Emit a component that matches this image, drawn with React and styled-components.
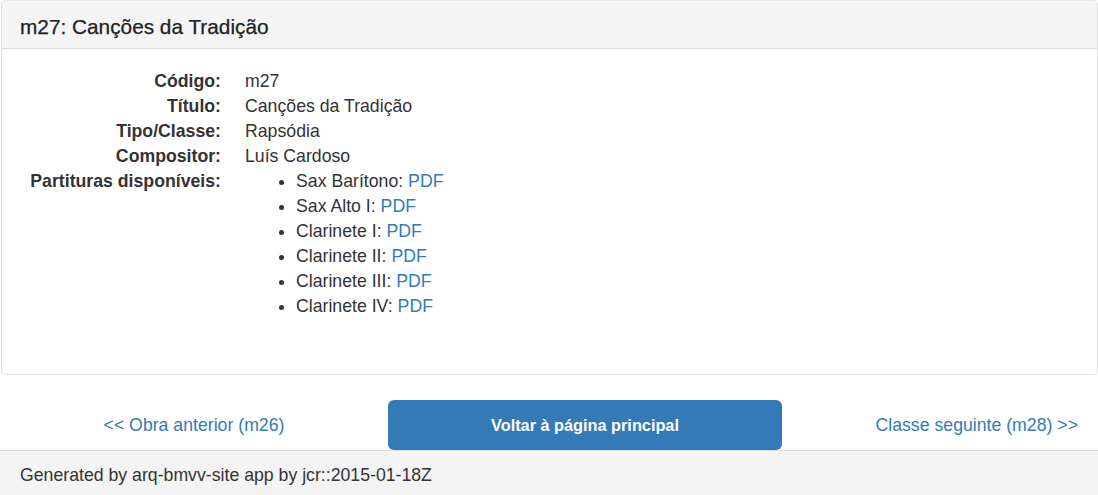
import React from "react";
import styled, { createGlobalStyle } from "styled-components";

const GlobalStyle = createGlobalStyle`
  html, body {
    margin: 0;
    padding: 0;
    background: #fff;
    overflow: hidden;
  }
  body {
    font-family: "Liberation Sans", Arial, Helvetica, sans-serif;
    font-size: 17.7px;
    line-height: 25px;
    color: #333;
  }
`;

const Panel = styled.div`
  box-sizing: border-box;
  width: 1097px;
  margin-left: 1px;
  border: 1px solid #ddd;
  border-top-color: #e6e6e6;
  border-radius: 5px;
  background: #fff;
`;

const PanelHeading = styled.div`
  background: #f5f5f5;
  border-bottom: 1px solid #ddd;
  border-radius: 4px 4px 0 0;
  padding: 14px 18px 10px;
  height: 23px;
`;

const PanelTitle = styled.h3`
  margin: 0;
  font-size: 20.8px;
  font-weight: normal;
  line-height: 23px;
  color: #222;
  -webkit-text-stroke: 0.25px #222;
`;

const PanelBody = styled.div`
  padding: 20px 19px 55px;
`;

const Details = styled.dl`
  display: grid;
  grid-template-columns: 200px 1fr;
  column-gap: 24px;
  margin: 0;
`;

const Term = styled.dt`
  font-weight: bold;
  text-align: right;
  white-space: nowrap;
`;

const Value = styled.dd`
  margin: 0;
`;

const Scores = styled.ul`
  margin: 0;
  padding-left: 51px;
  list-style: disc;
`;

const Link = styled.a`
  color: #337ab7;
  text-decoration: none;
`;

const NavRow = styled.div`
  display: grid;
  grid-template-columns: 388px 394px 1fr;
  margin-top: 25px;
  height: 50px;
`;

const NavLink = styled(Link)`
  display: flex;
  align-items: center;
  justify-content: ${(p) => (p.$end ? "flex-end" : "center")};
  padding-right: ${(p) => (p.$end ? "20px" : "0")};
  padding-top: 1px;
`;

const HomeButton = styled.a`
  display: flex;
  align-items: center;
  justify-content: center;
  background: #337ab7;
  color: #fff;
  font-weight: bold;
  font-size: 16.3px;
  border-radius: 6px;
  text-decoration: none;
`;

const Footer = styled.footer`
  border-top: 1px solid #ddd;
  background: #f4f4f4;
  height: 45px;
  padding: 12px 20px 0;
  box-sizing: border-box;
`;

const details = [
  ["Código:", "m27"],
  ["Título:", "Canções da Tradição"],
  ["Tipo/Classe:", "Rapsódia"],
  ["Compositor:", "Luís Cardoso"],
];

const scores = [
  "Sax Barítono",
  "Sax Alto I",
  "Clarinete I",
  "Clarinete II",
  "Clarinete III",
  "Clarinete IV",
];

export default function App() {
  return (
    <>
      <GlobalStyle />
      <Panel>
        <PanelHeading>
          <PanelTitle>m27: Canções da Tradição</PanelTitle>
        </PanelHeading>
        <PanelBody>
          <Details>
            {details.map(([term, value]) => (
              <React.Fragment key={term}>
                <Term>{term}</Term>
                <Value>{value}</Value>
              </React.Fragment>
            ))}
            <Term>Partituras disponíveis:</Term>
            <Value>
              <Scores>
                {scores.map((s) => (
                  <li key={s}>
                    {s}: <Link href="#">PDF</Link>
                  </li>
                ))}
              </Scores>
            </Value>
          </Details>
        </PanelBody>
      </Panel>
      <NavRow>
        <NavLink href="#">&lt;&lt; Obra anterior (m26)</NavLink>
        <HomeButton href="#">Voltar à página principal</HomeButton>
        <NavLink href="#" $end>Classe seguinte (m28) &gt;&gt;</NavLink>
      </NavRow>
      <Footer>Generated by arq-bmvv-site app by jcr::2015-01-18Z</Footer>
    </>
  );
}
